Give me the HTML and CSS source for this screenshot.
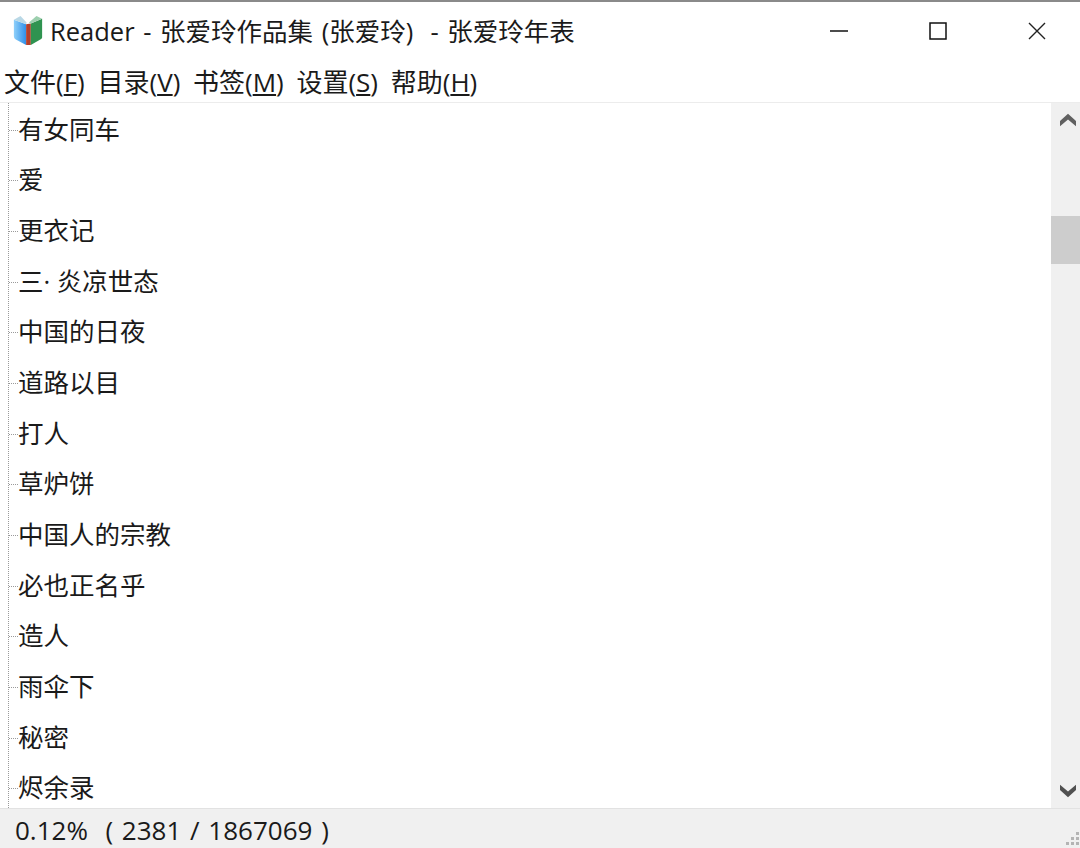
FILE: index.html
```html
<!DOCTYPE html>
<html lang="zh-CN">
<head>
    <meta charset="UTF-8">
    <title>Reader - 张爱玲作品集 (张爱玲) - 张爱玲年表</title>
    <link rel="stylesheet" href="styles.css">
</head>
<body>
<div class="window">
    <div class="titlebar">
        <svg class="appicon" width="32" height="32" viewBox="0 0 34 34">
            <defs>
                <linearGradient id="bookblue" x1="0" x2="1" y1="0" y2="0">
                    <stop offset="0" stop-color="#8fd0fa"/>
                    <stop offset="1" stop-color="#2f8fe8"/>
                </linearGradient>
            </defs>
            <path d="M2 6 L15 11 L15 33 L4 27 Q2 26 2 24 Z" fill="url(#bookblue)"/>
            <path d="M15 11 L20 10 L20 33 L15 33 Z" fill="#b5402c"/>
            <path d="M20 10 L32 5 L32 25 Q32 26 31 26.500 L20 33 Z" fill="#2f9350"/>
            <path d="M2 6 L9 2 L15.500 9 L15 11 Z" fill="#b9d8e6"/>
            <path d="M32 5 L26 2 L18 9 L20 10 Z" fill="#9ccfae"/>
        </svg>
        <div class="title">Reader - 张爱玲作品集 (张爱玲)&nbsp; - 张爱玲年表</div>
        <div class="winbtns">
            <svg width="18" height="18" viewBox="0 0 18 18"><path d="M0 9H18" stroke="#111" stroke-width="1.500"/></svg>
            <svg width="18" height="18" viewBox="0 0 18 18"><rect x="1" y="1" width="16" height="16" fill="none" stroke="#111" stroke-width="1.500"/></svg>
            <svg width="18" height="18" viewBox="0 0 18 18"><path d="M1 1L17 17M17 1L1 17" stroke="#222" stroke-width="1.400"/></svg>
        </div>
    </div>
    <div class="menubar">
        <span>文件(<u>F</u>)</span>
        <span>目录(<u>V</u>)</span>
        <span>书签(<u>M</u>)</span>
        <span>设置(<u>S</u>)</span>
        <span>帮助(<u>H</u>)</span>
    </div>
    <div class="main">
        <ul class="tree">
            <li>有女同车</li>
            <li>爱</li>
            <li>更衣记</li>
            <li>三· 炎凉世态</li>
            <li>中国的日夜</li>
            <li>道路以目</li>
            <li>打人</li>
            <li>草炉饼</li>
            <li>中国人的宗教</li>
            <li>必也正名乎</li>
            <li>造人</li>
            <li>雨伞下</li>
            <li>秘密</li>
            <li>烬余录</li>
        </ul>
        <div class="scrollbar">
            <div class="arrow">
                <svg width="16" height="14" viewBox="0 0 18 14"><path d="M0 8L9 0L18 8V14L9 6.500L0 14Z" fill="#606060"/></svg>
            </div>
            <div class="thumb"></div>
            <div class="spacer"></div>
            <div class="arrow">
                <svg width="16" height="14" viewBox="0 0 18 14"><path d="M0 0L9 7.500L18 0V6L9 14L0 6Z" fill="#505050"/></svg>
            </div>
        </div>
    </div>
    <div class="statusbar">
        <span class="status-text">0.12% &nbsp;( 2381 / 1867069 )</span>
        <svg class="grip" width="16" height="16" viewBox="0 0 16 16" fill="#b4b4b4">
            <rect x="12" y="0" width="3" height="3"/>
            <rect x="7" y="5" width="3" height="3"/><rect x="12" y="5" width="3" height="3"/>
            <rect x="2" y="10" width="3" height="3"/><rect x="7" y="10" width="3" height="3"/><rect x="12" y="10" width="3" height="3"/>
        </svg>
    </div>
</div>
</body>
</html>
```

FILE: styles.css
```css
html, body {
    margin: 0;
    height: 100%;
}

body {
    font-family: "Open Sans", "Noto Sans CJK SC", sans-serif;
    color: #1a1a1a;
    background: #fff;
}

ul {
    margin: 0;
    padding: 0;
    list-style: none;
}

.window {
    display: flex;
    flex-direction: column;
    width: 1080px;
    height: 848px;
    overflow: hidden;
    border-top: 2px solid #8a8a8a;
    box-sizing: border-box;
}

.titlebar {
    display: flex;
    align-items: center;
    flex: none;
    box-sizing: border-box;
    height: 60px;
    padding-left: 12px;
    padding-bottom: 6px;
}

.appicon {
    flex: none;
    margin-top: 2px;
    margin-right: 6px;
}

.title {
    flex: 1;
    font-size: 25.500px;
    word-spacing: 2px;
    white-space: nowrap;
}

.winbtns {
    display: flex;
    gap: 81px;
    padding-right: 34px;
    margin-top: 4px;
}

.winbtns svg {
    width: 18px;
    height: 18px;
}

.menubar {
    display: flex;
    gap: 12.700px;
    flex: none;
    height: 40px;
    padding-left: 4px;
    font-size: 26px;
    line-height: 40px;
    border-bottom: 1px solid #ececec;
    white-space: nowrap;
}

.main {
    display: flex;
    flex: 1;
    min-height: 0;
}

.tree {
    position: relative;
    flex: 1;
    overflow: hidden;
    padding-top: 1.500px;
}

.tree::before {
    content: "";
    position: absolute;
    left: 8px;
    top: 0;
    bottom: 0;
    border-left: 1px dotted #9a9a9a;
}

.tree li {
    position: relative;
    height: 50.7px;
    padding-left: 18px;
    font-size: 25.500px;
    line-height: 49px;
    white-space: nowrap;
}

.tree li::before {
    content: "";
    position: absolute;
    left: 9px;
    top: 25px;
    width: 9px;
    border-top: 1px dotted #9a9a9a;
}

.scrollbar {
    display: flex;
    flex-direction: column;
    flex: none;
    width: 29px;
    background: #f0f0f0;
}

.arrow {
    display: flex;
    align-items: center;
    justify-content: center;
    flex: none;
    height: 34px;
    padding-left: 5px;
}

.thumb {
    flex: none;
    height: 48px;
    margin-top: 79px;
    background: #cdcdcd;
}

.spacer {
    flex: 1;
}

.statusbar {
    position: relative;
    flex: none;
    height: 39px;
    padding-left: 15px;
    font-size: 26px;
    line-height: 43px;
    background: #f0f0f0;
    border-top: 1px solid #e2e2e2;
    white-space: nowrap;
}

.status-text {
    word-spacing: 2px;
}

.grip {
    position: absolute;
    right: 0;
    bottom: 0;
}
```
